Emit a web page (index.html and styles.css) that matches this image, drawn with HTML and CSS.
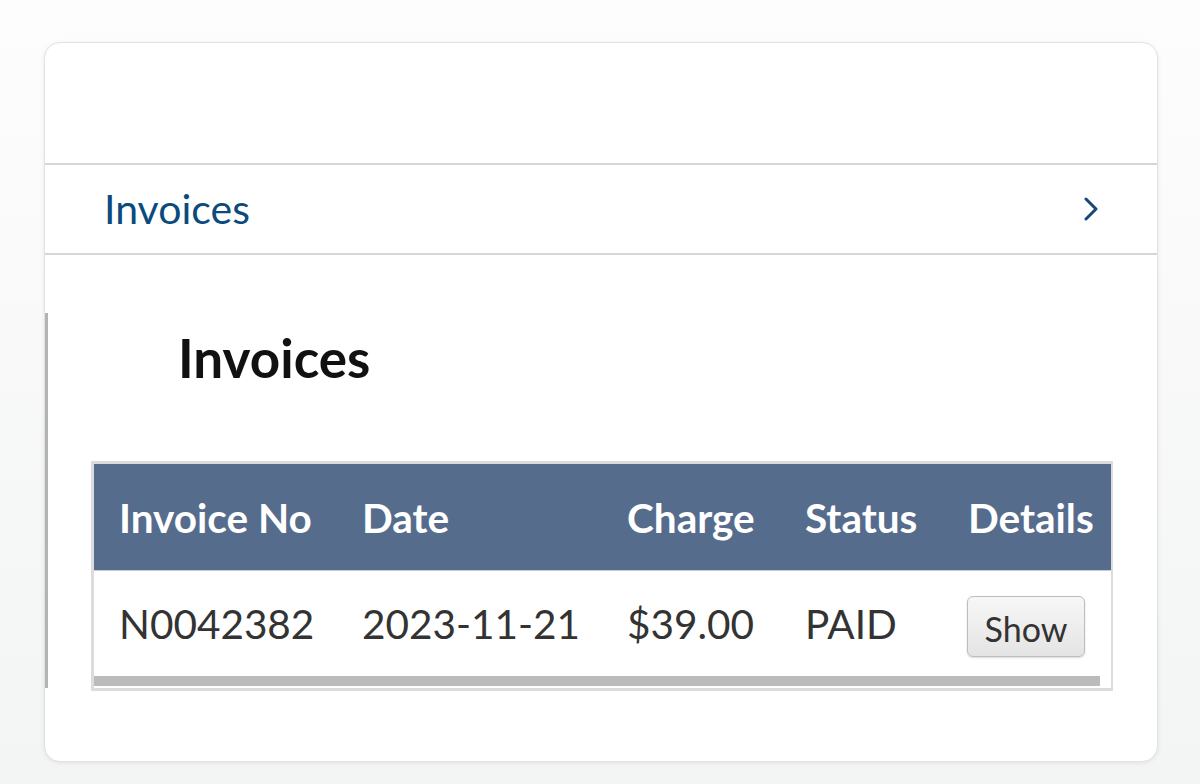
FILE: index.html
```html
<!DOCTYPE html>
<html>
<head>
<meta charset="utf-8">
<link rel="stylesheet" href="styles.css">
</head>
<body>
<div class="card">
  <div class="card-top"></div>
  <a class="nav-row" href="#">
    <span class="nav-label">Invoices</span>
    <svg class="chevron" width="16" height="24" viewBox="0 0 16 24"><path d="M3 2 L13 12 L3 22" fill="none" stroke="#17477a" stroke-width="3" stroke-linecap="round" stroke-linejoin="round"/></svg>
  </a>
  <div class="content">
    <h1 class="title">Invoices</h1>
    <div class="table-wrap">
      <table class="inv-table">
        <thead>
          <tr>
            <th class="c1">Invoice No</th>
            <th class="c2">Date</th>
            <th class="c3">Charge</th>
            <th class="c4">Status</th>
            <th class="c5">Details</th>
          </tr>
        </thead>
        <tbody>
          <tr>
            <td>N0042382</td>
            <td>2023-11-21</td>
            <td>$39.00</td>
            <td>PAID</td>
            <td><button class="show-btn">Show</button></td>
          </tr>
        </tbody>
      </table>
      <div class="scrollbar"><div class="thumb"></div></div>
    </div>
  </div>
</div>
</body>
</html>
```
FILE: styles.css
```css
html, body {
  margin: 0;
  padding: 0;
}
body {
  width: 1200px;
  height: 784px;
  background: linear-gradient(#fdfdfd, #f3f4f4);
  font-family: Lato, "Open Sans", sans-serif;
  padding: 42px 0 0 44px;
  box-sizing: border-box;
  overflow: hidden;
}
.card {
  width: 1114px;
  height: 720px;
  box-sizing: border-box;
  background: #fff;
  border: 1px solid #e2e2e2;
  border-radius: 16px;
  box-shadow: 0 1px 4px rgba(0,0,0,0.08);
  overflow: hidden;
}
.card-top {
  height: 120px;
}
.nav-row {
  display: flex;
  align-items: center;
  justify-content: space-between;
  height: 88px;
  border-top: 2px solid #d6d6d6;
  border-bottom: 2px solid #d6d6d6;
  padding: 0 58px 0 59px;
  text-decoration: none;
}
.nav-label {
  color: #0b4a7d;
  font-size: 41px;
  line-height: 1;
  padding-bottom: 1px;
}
.chevron {
  display: block;
}
.content {
  margin-top: 58px;
  border-left: 3px solid #b3b3b3;
  height: 375px;
  padding-left: 43px;
}
.title {
  margin: 0;
  font-size: 53px;
  font-weight: 700;
  color: #111;
  line-height: 1;
  padding: 18px 0 0 87px;
  height: 148px;
  box-sizing: border-box;
}
.table-wrap {
  width: 1022px;
  box-sizing: border-box;
  border: 3px solid #dcdcdc;
  border-right-width: 2px;
  overflow: hidden;
  position: relative;
}
.inv-table {
  border-collapse: collapse;
  width: 1030px;
  table-layout: fixed;
}
.inv-table th,
.inv-table td {
  padding: 0 0 0 25px;
  text-align: left;
  white-space: nowrap;
}
.c1 { width: 218px; }
.c2 { width: 240px; }
.c3 { width: 153px; }
.c4 { width: 138px; }
.c5 { width: 156px; }
.inv-table th {
  background: #566c8c;
  color: #fff;
  font-weight: 700;
  font-size: 40.5px;
  height: 106px;
  border-bottom: 1px solid #c8ccd4;
}
.inv-table td {
  color: #333;
  font-size: 40.5px;
  height: 105px;
}
.show-btn {
  font-family: Lato, "Open Sans", sans-serif;
  font-size: 34px;
  color: #333;
  width: 118px;
  height: 61px;
  margin-left: -1px;
  margin-top: 6px;
  padding: 4px 0 0;
  border: 1px solid #bdbdbd;
  border-radius: 6px;
  background: linear-gradient(#f7f7f7, #e4e4e4);
  box-shadow: 0 1px 2px rgba(0,0,0,0.15);
}
.scrollbar {
  height: 11px;
  padding: 0 11px 1px 0;
}
.thumb {
  height: 10px;
  background: #bbbbbb;
}
```
